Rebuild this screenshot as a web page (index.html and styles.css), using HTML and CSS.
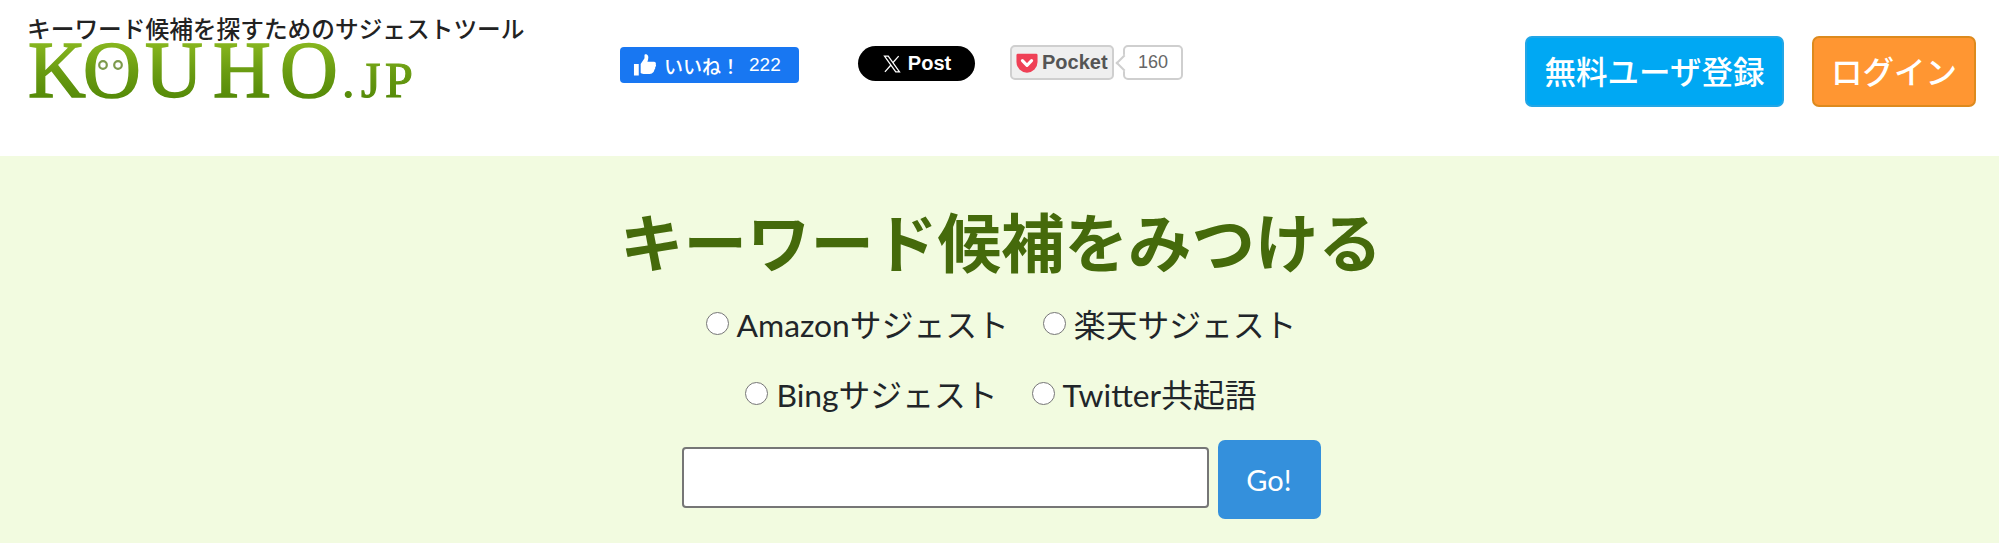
FILE: index.html
```html
<!DOCTYPE html>
<html lang="ja">
<head>
<meta charset="utf-8">
<title>KOUHO.JP</title>
<link rel="stylesheet" href="styles.css">
</head>
<body>
<header class="header">
  <div class="brand">
    <p class="tagline">キーワード候補を探すためのサジェストツール</p>
    <svg class="logo" viewBox="0 0 390 70" role="img" aria-label="KOUHO.JP">
      <defs>
        <linearGradient id="logo-green" gradientUnits="userSpaceOnUse" x1="0" y1="2" x2="0" y2="56">
          <stop offset="0" stop-color="#86b51e"/>
          <stop offset="0.5" stop-color="#6a9c12"/>
          <stop offset="1" stop-color="#558a08"/>
        </linearGradient>
      </defs>
      <text class="logo-main" x="0 55 117 185 252" y="55">KOUHO</text>
      <text class="logo-tld" x="314 333 357" y="55">.JP</text>
      <circle class="logo-eye" cx="75" cy="23" r="3.800"/>
      <circle class="logo-eye" cx="90" cy="23" r="3.800"/>
    </svg>
  </div>
  <div class="social">
    <a class="fb">
      <svg class="fb-icon" viewBox="0 0 24 24"><path fill="#fff" d="M1 11h5v12H1zM8 11l4-6V1.500c0-1 2.500-1.200 3.500.5 1 1.800.3 4.500-.5 6.500h7c1.500 0 2.300 1.600 1.700 2.800.6 1 .3 2.300-.6 3 .4 1 0 2.200-1 2.800.2 1.100-.3 2.300-1.600 2.900-1 1-2.500 1.500-4.500 1.500H12c-1.500 0-2.500-.6-4-1.200z"/></svg>
      <span class="fb-label">いいね！</span><span class="fb-count">222</span>
    </a>
    <a class="post">
      <svg class="x-icon" viewBox="0 0 24 24"><path fill="none" stroke="#fff" stroke-width="1.500" d="M3 2.500h4.500l13.500 19h-4.500zM20 2.500l-7 8M10.500 13.500L3.500 21.500"/></svg>
      <span>Post</span>
    </a>
    <div class="pocket">
      <a class="pocket-btn">
        <svg class="pocket-icon" viewBox="0 0 24 24"><path fill="#ef4056" d="M2 2h20a1.500 1.500 0 0 1 1.500 1.500V11a11.500 11.500 0 0 1-23 0V3.500A1.500 1.500 0 0 1 2 2z"/><path fill="none" stroke="#fff" stroke-width="3.400" stroke-linecap="round" stroke-linejoin="round" d="M7 9.500l5 5 5-5"/></svg>
        <span>Pocket</span>
      </a>
      <span class="pocket-count">160</span>
    </div>
  </div>
  <nav class="actions">
    <a class="btn btn-signup">無料ユーザ登録</a>
    <a class="btn btn-login">ログイン</a>
  </nav>
</header>
<main class="hero">
  <h1 class="title">キーワード候補をみつける</h1>
  <form class="search">
    <div class="options">
      <label class="option"><input type="radio" name="src"><span>Amazonサジェスト</span></label>
      <label class="option"><input type="radio" name="src"><span>楽天サジェスト</span></label>
    </div>
    <div class="options">
      <label class="option"><input type="radio" name="src"><span>Bingサジェスト</span></label>
      <label class="option"><input type="radio" name="src"><span>Twitter共起語</span></label>
    </div>
    <div class="query">
      <input class="query-input" type="text">
      <button class="go" type="button">Go!</button>
    </div>
  </form>
</main>
</body>
</html>
```
FILE: styles.css
```css
* { box-sizing: border-box; }
html, body { margin: 0; height: 100%; }
body {
  display: flex;
  flex-direction: column;
  overflow: hidden;
  background: #fff;
  color: #212529;
  font-family: Lato, "Noto Sans CJK JP", sans-serif;
}
.header {
  height: 156px;
  flex: none;
  display: flex;
  align-items: flex-start;
  padding-left: 27px;
}
.brand { width: 593px; padding-top: 14px; flex: none; }
.tagline {
  margin: 0;
  font-size: 23.7px;
  font-weight: 500;
  line-height: 28px;
  white-space: nowrap;
  color: #222;
  font-family: "Noto Sans CJK JP", sans-serif;
}
.logo {
  display: block;
  width: 390px;
  height: 70px;
  margin-left: 1px;
  overflow: visible;
}
.logo-main, .logo-tld {
  font-family: "Liberation Serif", serif;
  font-weight: 400;
  fill: url(#logo-green);
  stroke: url(#logo-green);
}
.logo-main { font-size: 80px; stroke-width: 1.600px; }
.logo-tld { font-size: 50px; stroke-width: 1.200px; }
.logo-eye { fill: #fff; stroke: #7d9a4c; stroke-width: 2.200px; }

.social { display: flex; align-items: flex-start; flex: none; padding-top: 45px; }
.fb {
  width: 179px;
  height: 36px;
  margin-top: 2px;
  display: flex;
  align-items: center;
  background: #1877f2;
  border-radius: 4px;
  color: #fff;
  padding-left: 13px;
  font-family: "Noto Sans CJK JP", sans-serif;
}
.fb-icon { width: 23px; height: 24px; margin-right: 8px; }
.fb-label { width: 85px; font-size: 19px; font-weight: 500; white-space: nowrap; }
.fb-count { font-family: "Liberation Sans", sans-serif; font-size: 19px; }
.post {
  width: 117px;
  height: 35px;
  margin: 1px 0 0 59px;
  display: flex;
  align-items: center;
  justify-content: center;
  gap: 6px;
  background: #000;
  border-radius: 18px;
  color: #fff;
  font: 700 20px "Liberation Sans", sans-serif;
}
.x-icon { width: 20px; height: 20px; }
.pocket { display: flex; margin-left: 35px; }
.pocket-btn {
  width: 104px;
  height: 35px;
  display: flex;
  align-items: center;
  gap: 4px;
  padding-left: 4px;
  background: #efefef;
  border: 2px solid #cfcfcf;
  border-radius: 5px;
  color: #555;
  font: 700 20px "Liberation Sans", sans-serif;
  white-space: nowrap;
}
.pocket-icon { width: 22px; height: 22px; flex: none; }
.pocket-count {
  position: relative;
  width: 60px;
  height: 35px;
  margin-left: 9px;
  display: flex;
  align-items: center;
  justify-content: center;
  background: #fff;
  border: 2px solid #cfcfcf;
  border-radius: 5px;
  color: #666;
  font: 400 18px "Liberation Sans", sans-serif;
}
.pocket-count::before {
  content: "";
  position: absolute;
  left: -7px;
  top: 10px;
  width: 10px;
  height: 10px;
  background: #fff;
  border-left: 2px solid #cfcfcf;
  border-bottom: 2px solid #cfcfcf;
  transform: rotate(45deg);
}
.actions { margin-left: auto; margin-right: 23px; padding-top: 36px; display: flex; gap: 28px; }
.btn {
  height: 71px;
  display: flex;
  align-items: center;
  justify-content: center;
  padding-bottom: 4px;
  border-radius: 7px;
  color: #fff;
  font-family: "Noto Sans CJK JP", sans-serif;
  font-size: 31.500px;
  font-weight: 500;
}
.btn-signup { width: 259px; background: #00a8f3; border: 2px solid #22a6e6; }
.btn-login { width: 164px; background: #ff9632; border: 2px solid #dd8a1e; }

.hero {
  flex: 1;
  background: #f2fbe0;
  display: flex;
  flex-direction: column;
  align-items: center;
  padding-top: 46px;
}
.title {
  margin: 0 0 4px 3px;
  color: #456a0b;
  font-size: 63.500px;
  line-height: 82px;
  font-weight: 700;
  white-space: nowrap;
}
.search { display: flex; flex-direction: column; align-items: center; }
.options {
  display: flex;
  justify-content: center;
  gap: 34px;
  height: 70px;
  margin-left: 3px;
  align-items: center;
  font-size: 31.800px;
}
.option { display: flex; align-items: center; gap: 8px; color: #212529; white-space: nowrap; }
.option input {
  appearance: none;
  margin: 0;
  width: 23px;
  height: 23px;
  background: #fff;
  border: 1.500px solid #767676;
  border-radius: 50%;
}
.query { display: flex; align-items: center; gap: 9px; margin-top: 12px; margin-left: 3px; }
.query-input {
  width: 527px;
  height: 61px;
  margin-bottom: 5px;
  background: #fff;
  border: 2px solid #767676;
  border-radius: 4px;
}
.go {
  width: 103px;
  height: 79px;
  background: #3490dc;
  border: none;
  border-radius: 7px;
  color: #fff;
  font-family: Lato, sans-serif;
  font-size: 29px;
}
```
